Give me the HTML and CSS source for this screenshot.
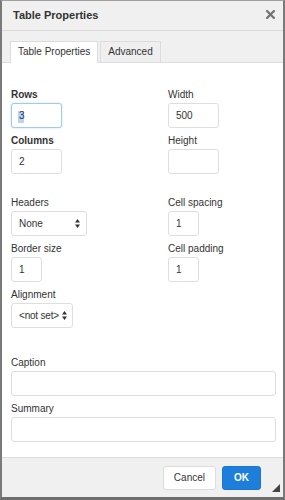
FILE: index.html
```html
<!DOCTYPE html>
<html lang="en">
<head>
    <meta charset="UTF-8">
    <title>Table Properties</title>
    <link rel="stylesheet" href="styles.css">
</head>
<body>
    <div class="dialog">
        <div class="dialog-head">
            <span class="title">Table Properties</span>
            <span class="close">
                <svg width="9" height="9" viewBox="0 0 9 9"><path d="M1 1L8 8M8 1L1 8" stroke="#727272" stroke-width="2.2" stroke-linecap="square"/></svg>
            </span>
        </div>
        <div class="tabs">
            <div class="tab active">Table Properties</div>
            <div class="tab">Advanced</div>
        </div>

        <div class="panel">
            <div class="grid">
                <div class="field">
                    <label class="bold">Rows</label>
                    <input type="text" class="txt w51 focused" value="3">
                </div>
                <div class="field">
                    <label>Width</label>
                    <input type="text" class="txt w51" value="500">
                </div>
                <div class="field">
                    <label class="bold">Columns</label>
                    <input type="text" class="txt w51" value="2">
                </div>
                <div class="field">
                    <label>Height</label>
                    <input type="text" class="txt w51" value="">
                </div>
            </div>

            <div class="grid section">
                <div class="field">
                    <label>Headers</label>
                    <select class="sel w76"><option>None</option></select>
                </div>
                <div class="field">
                    <label>Cell spacing</label>
                    <input type="text" class="txt w31" value="1">
                </div>
                <div class="field">
                    <label>Border size</label>
                    <input type="text" class="txt w31" value="1">
                </div>
                <div class="field">
                    <label>Cell padding</label>
                    <input type="text" class="txt w31" value="1">
                </div>
                <div class="field">
                    <label>Alignment</label>
                    <select class="sel w62 narrow"><option>&lt;not set&gt;</option></select>
                </div>
            </div>

            <div class="wide">
                <div class="field">
                    <label>Caption</label>
                    <input type="text" class="txt full" value="">
                </div>
                <div class="field">
                    <label>Summary</label>
                    <input type="text" class="txt full" value="">
                </div>
            </div>
        </div>

        <div class="foot">
            <button class="btn">Cancel</button>
            <button class="btn primary">OK</button>
            <span class="resize"></span>
        </div>
    </div>
</body>
</html>
```

FILE: styles.css
```css
* {
    box-sizing: border-box;
}
body {
    margin: 0;
    font-family: "Liberation Sans", Arial, sans-serif;
    font-size: 10px;
    color: #333;
}
.dialog {
    width: 285px;
    height: 500px;
    display: flex;
    flex-direction: column;
    border: 2px solid #7a7a7a;
    border-top: 1px solid #a0a0a0;
    border-bottom: 3px solid #6e6e6e;
    background: #f0f0f0;
}
.dialog-head {
    height: 30px;
    display: flex;
    align-items: center;
    justify-content: space-between;
    padding: 0 8px 1px 11px;
    border-bottom: 1px solid #dcdcdc;
}
.title {
    font-size: 11px;
    font-weight: bold;
    color: #333;
}
.close {
    display: flex;
    margin-top: -2px;
}
.tabs {
    display: flex;
    align-items: flex-end;
    gap: 2px;
    padding: 10px 0 0 8px;
    border-bottom: 1px solid #dcdcdc;
}
.tab {
    line-height: 20px;
    padding: 0 7px;
    border: 1px solid #dcdcdc;
    border-bottom: none;
    background: #efefef;
    color: #333;
}
.tab.active {
    background: #fff;
    margin-bottom: -1px;
    padding-bottom: 1px;
}
.panel {
    flex: 1;
    background: #fff;
    padding: 23px 7px 0 9px;
}
.grid {
    display: grid;
    grid-template-columns: 157px 1fr;
    row-gap: 4px;
}
.section {
    margin-top: 20px;
}
.wide {
    display: flex;
    flex-direction: column;
    gap: 4px;
    margin-top: 26px;
}
.field label {
    display: block;
    line-height: 17px;
}
.bold {
    font-weight: bold;
}
.txt, .sel {
    display: block;
    height: 25px;
    margin: 0;
    padding: 0 7px;
    border: 1px solid #dedede;
    border-radius: 3px;
    font-family: inherit;
    font-size: 10px;
    color: #333;
    background: #fff;
    outline: none;
}
.sel {
    -webkit-appearance: none;
    appearance: none;
    background: #fff url("data:image/svg+xml;utf8,<svg xmlns='http://www.w3.org/2000/svg' width='5' height='9'><path d='M2.5 0L5 3.5H0z M2.5 9L0 5.5H5z' fill='%23333'/></svg>") no-repeat right 6px center;
}
.sel.narrow {
    padding: 0 4px 0 7px;
    letter-spacing: -0.2px;
    background-position: right 5px center;
}
.focused {
    border-color: #a3c9f2;
    box-shadow: 0 0 2px #bcd9f8;
    background: #fff linear-gradient(#b5d5fb, #b5d5fb) no-repeat 6px 7px / 6px 12px;
}
.w31 { width: 31px; }
.w51 { width: 51px; }
.w62 { width: 62px; }
.w76 { width: 76px; }
.full { width: 100%; }
.foot {
    position: relative;
    height: 40px;
    display: flex;
    align-items: center;
    justify-content: flex-end;
    gap: 6px;
    padding-right: 22px;
    border-top: 1px solid #dcdcdc;
}
.btn {
    height: 24px;
    padding: 0 10px;
    border: 1px solid #dcdcdc;
    border-radius: 3px;
    background: #fff;
    font-family: inherit;
    font-size: 10px;
    color: #333;
}
.btn.primary {
    padding: 0 11px;
    background: #1d7fdb;
    border-color: #1b76cc;
    color: #fff;
    font-weight: bold;
}
.resize {
    position: absolute;
    right: 3px;
    bottom: 5px;
    width: 0;
    height: 0;
    border-left: 8px solid transparent;
    border-bottom: 8px solid #444;
}
```
